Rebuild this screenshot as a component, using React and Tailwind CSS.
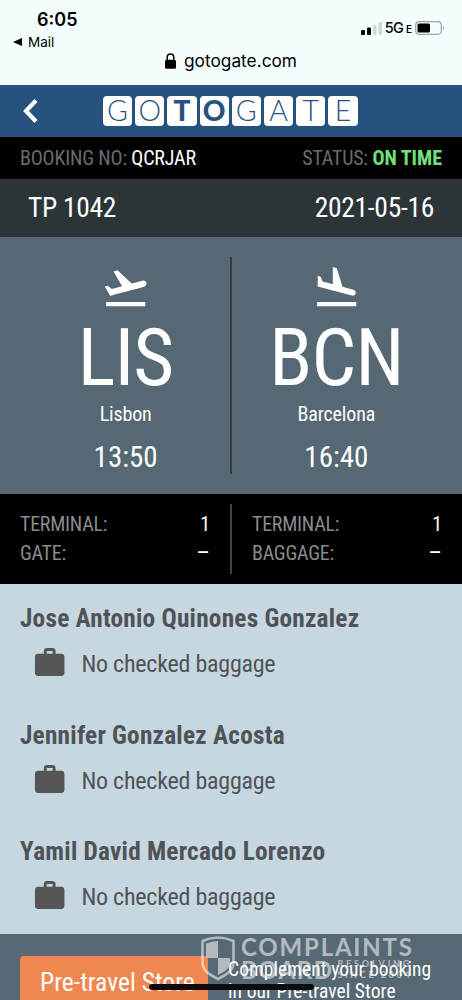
import React from 'react';
import { MdFlightTakeoff, MdFlightLand, MdWork } from 'react-icons/md';

const LOGO = [
  { char: 'G' },
  { char: 'O' },
  { char: 'T', heavy: true },
  { char: 'O', heavy: true },
  { char: 'G' },
  { char: 'A' },
  { char: 'T' },
  { char: 'E' },
];

const PASSENGERS = [
  'Jose Antonio Quinones Gonzalez',
  'Jennifer Gonzalez Acosta',
  'Yamil David Mercado Lorenzo',
];

function StatusBar() {
  return (
    <div className="h-[85px] bg-[#f5feff] text-black font-['Inter',sans-serif]">
      <div className="flex h-[50px] justify-between">
        <div className="pl-[13px] pt-[9px]">
          <div className="pl-6 text-[18px] leading-[21px] font-semibold">6:05</div>
          <div className="mt-[3px] flex items-center gap-[6px] text-[13.5px] leading-[18px]">
            <svg width="9" height="8" viewBox="0 0 9 8"><path d="M0 4L9 0v8z" /></svg>
            Mail
          </div>
        </div>
        <div className="mr-[17px] mt-[19px] flex h-[18px] items-center">
          <svg width="22" height="13" viewBox="0 0 22 13" className="mr-[2px]">
            <rect x="0" y="8" width="4" height="5" rx="1" />
            <rect x="6" y="5.5" width="4" height="7.5" rx="1" />
            <rect x="12" y="3" width="3.5" height="10" rx="1" fill="#d0d8d9" />
            <rect x="17.5" y="0" width="3.5" height="13" rx="1" fill="#d0d8d9" />
          </svg>
          <span className="text-[14.5px] leading-[18px] font-medium tracking-[-0.8px]">5G</span>
          <span className="ml-[3px] mt-[3px] text-[10px] font-semibold">E</span>
          <svg width="30" height="14" viewBox="0 0 30 14" className="ml-[3px]">
            <rect x="0.7" y="0.7" width="25.6" height="12.6" rx="3.5" fill="none" stroke="#9da5a6" strokeWidth="1.2" />
            <rect x="2.5" y="2.5" width="12.5" height="9" rx="1.5" />
            <path d="M28 4.8c1.4.6 1.4 3.8 0 4.4z" fill="#9da5a6" />
          </svg>
        </div>
      </div>
      <div className="flex items-center justify-center gap-2 text-[17.3px] leading-[21px]">
        <svg width="11" height="16" viewBox="0 0 11 16">
          <path d="M2.2 7.5V4.3a3.3 3.3 0 0 1 6.6 0v3.2" fill="none" stroke="#000" strokeWidth="1.5" />
          <rect x="0" y="6.8" width="11" height="9" rx="1.5" />
        </svg>
        gotogate.com
      </div>
    </div>
  );
}

function Header() {
  return (
    <div className="flex h-[52px] items-center bg-[#27527f] pl-[23px]">
      <svg width="15" height="24" viewBox="0 0 15 24" className="mr-[65px]">
        <path d="M13 1.5L3 12l10 10.500" fill="none" stroke="#fff" strokeWidth="4.2" />
      </svg>
      <div className="flex gap-[3px]">
        {LOGO.map(({ char, heavy }, i) => (
          <div
            key={i}
            className={`flex h-[29.5px] w-[29.2px] items-center justify-center rounded-[4px] bg-white pb-[2px] font-['Lato',sans-serif] leading-none text-[#27527f] ${
              heavy ? 'text-[28px] font-black' : 'text-[28.5px] font-light'
            }`}
          >
            {char}
          </div>
        ))}
      </div>
    </div>
  );
}

function Airport({ icon: Icon, code, city, time }) {
  return (
    <div className="flex flex-1 flex-col items-center text-white">
      <Icon size={49.4} className="mt-[6px]" />
      <div className="mt-[6px] text-[79px] leading-[80px] tracking-[-0.9px]">{code}</div>
      <div className="mt-[4px] text-[20px] leading-[24px] tracking-[-0.15px]">{city}</div>
      <div className="mt-[14px] text-[29px] leading-[34px]">{time}</div>
    </div>
  );
}

function InfoRow({ label, value }) {
  return (
    <div className="flex justify-between">
      <span className="tracking-[-0.25px] text-[#8a8a8a]">{label}</span>
      <span className={value === '–' ? 'text-[24px] text-white' : 'text-white'}>{value}</span>
    </div>
  );
}

function Passenger({ name }) {
  return (
    <div className="h-[116.5px]">
      <div className="text-[25.3px] leading-[30px] font-bold tracking-[0.22px]">{name}</div>
      <div className="mt-[11px] flex items-center pl-3">
        <MdWork size={35.4} className="text-[#555]" />
        <span className="ml-[14px] pt-[3px] text-[24px] leading-[32px] tracking-[-0.24px]">No checked baggage</span>
      </div>
    </div>
  );
}

function Watermark() {
  return (
    <div className="absolute left-[200px] top-[935px] flex font-['Lato',sans-serif] font-bold text-white opacity-55">
      <svg width="36" height="46" viewBox="0 0 36 46">
        <path d="M2.5 6Q18-1 33.500 6v22c0 8-8 12-15.500 16C10.500 40 2.500 36 2.500 28z" fill="none" stroke="#fff" strokeWidth="2.6" />
        <path d="M6 8.500q6-2.500 12-2.500v17H6z" fill="#fff" />
        <path d="M18 23h12v5c0 5.500-6 9-12 12z" fill="#fff" />
      </svg>
      <div className="ml-[5px]">
        <div className="text-[24px] leading-[23px] tracking-[1.8px]">COMPLAINTS</div>
        <div className="flex">
          <div className="text-[24px] leading-[23px] tracking-[1.5px]">BOARD</div>
          <div className="ml-1 text-[9px] leading-[11px] whitespace-nowrap">
            <div className="tracking-[2.8px]">RESOLVING</div>
            <div className="tracking-[2.6px]">SINCE 2004</div>
          </div>
        </div>
      </div>
    </div>
  );
}

export default function App() {
  return (
    <div className="relative h-[1000px] w-[462px] overflow-hidden bg-[#566874] font-['Roboto_Condensed','Roboto',sans-serif] [font-stretch:75%]">
      <StatusBar />
      <Header />
      <div className="flex h-[42px] items-center justify-between bg-black px-5 text-[20px] text-white">
        <div className="tracking-[-0.17px]"><span className="text-[#6b6b6b]">BOOKING NO:</span> QCRJAR</div>
        <div><span className="tracking-[-0.2px] text-[#6b6b6b]">STATUS:</span> <span className="font-bold text-[#72e07c]">ON TIME</span></div>
      </div>
      <div className="flex h-[58px] items-center justify-between bg-[#2b3537] px-7 text-[27.5px] tracking-[-0.3px] text-white">
        <span>TP 1042</span>
        <span>2021-05-16</span>
      </div>
      <div className="flex h-[257px] px-5 pt-5">
        <Airport icon={MdFlightTakeoff} code="LIS" city="Lisbon" time="13:50" />
        <div className="-mx-px h-[217px] w-[1.5px] bg-[#343c42]" />
        <Airport icon={MdFlightLand} code="BCN" city="Barcelona" time="16:40" />
      </div>
      <div className="flex h-[90px] bg-black px-5 pt-[10px] text-[20px] leading-[28.5px]">
        <div className="flex-1 pr-5 pt-[6px]">
          <InfoRow label="TERMINAL:" value="1" />
          <InfoRow label="GATE:" value="–" />
        </div>
        <div className="h-[70px] w-[2px] bg-[#444]" />
        <div className="flex-1 pl-5 pt-[6px]">
          <InfoRow label="TERMINAL:" value="1" />
          <InfoRow label="BAGGAGE:" value="–" />
        </div>
      </div>
      <div className="h-[350px] bg-[#c6d7e1] px-5 pt-5 text-[#4f5356]">
        {PASSENGERS.map((name) => (
          <Passenger key={name} name={name} />
        ))}
      </div>
      <div className="flex px-5 pt-[22px] text-white">
        <div className="h-[60px] w-[188px] rounded-[4px] bg-[#ee8850] pl-5 pt-[10px] text-[25.5px] leading-[32px] tracking-[0.05px]">Pre-travel Store</div>
        <div className="ml-5 pt-[3px] text-[19.5px] leading-[22px] tracking-[0.08px] whitespace-nowrap">
          Complement your booking
          <br />
          in our Pre-travel Store
        </div>
      </div>
      <Watermark />
      <div className="absolute left-[149px] top-[984px] h-[5.5px] w-[165px] rounded-full bg-[#0c0c0e]" />
    </div>
  );
}
